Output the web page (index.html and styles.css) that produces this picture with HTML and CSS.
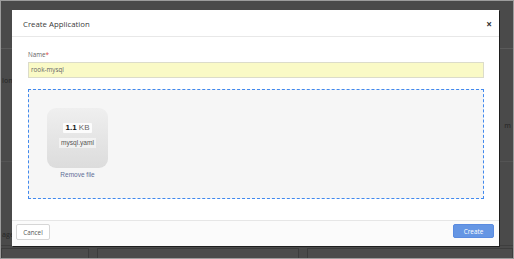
FILE: index.html
```html
<!DOCTYPE html>
<html lang="en">
<head>
<meta charset="utf-8">
<title>Create Application</title>
<link rel="stylesheet" href="styles.css">
</head>
<body>
<div class="screen">
  <div class="page">
    <div class="page-top"></div>
    <div class="page-mid">
      <div class="side-text left-a">ion</div>
      <div class="side-text right-a">m</div>
    </div>
    <div class="page-foot">
      <div class="side-text left-b">age</div>
    </div>
    <div class="page-cards">
      <div class="card c1"></div>
      <div class="card c2"></div>
      <div class="card c3"></div>
    </div>
  </div>

  <div class="modal">
    <div class="modal-header">
      <span class="modal-title">Create Application</span>
      <span class="modal-close">&times;</span>
    </div>
    <div class="modal-body">
      <label class="field-label">Name<span class="req">*</span></label>
      <div class="text-input">rook-mysql</div>
      <div class="dropzone">
        <div class="preview">
          <div class="preview-box">
            <span class="size"><strong>1.1</strong> KB</span>
            <span class="filename">mysql.yaml</span>
          </div>
          <a class="remove">Remove file</a>
        </div>
      </div>
    </div>
    <div class="modal-footer">
      <button class="btn btn-cancel">Cancel</button>
      <button class="btn btn-create">Create</button>
    </div>
  </div>
</div>
</body>
</html>
```

FILE: styles.css
```css
* { box-sizing: border-box; }
html, body { margin: 0; padding: 0; }
body { background: #4a4a4a; font-family: "Open Sans", "Liberation Sans", sans-serif; }

.screen {
  position: relative;
  width: 514px;
  height: 259px;
  border: 1px solid #9c9c9c;
  background: #4a4a4a;
  overflow: hidden;
}

/* dimmed page behind overlay */
.page { display: flex; flex-direction: column; height: 100%; }
.page-top { height: 49px; border-bottom: 1px solid #5a5a5a; }
.page-mid { height: 115px; border-bottom: 1px solid #545454; display: flex; justify-content: space-between; align-items: center; }
.page-foot { height: 85px; border-bottom: 1px solid #3e3e3e; display: flex; align-items: flex-end; padding-bottom: 6px; }
.side-text { font-size: 7px; color: #2c2c2c; font-weight: 600; }
.left-a { margin-left: 1px; margin-top: -50px; }
.right-a { margin-right: 2px; margin-top: 40px; }
.left-b { margin-left: 1px; }
.page-cards { display: flex; gap: 8px; padding-top: 2px; flex: 1; }
.card { border: 1px solid #3c3c3c; border-bottom: 0; background: #4c4c4c; height: 10px; }
.c1 { width: 88px; }
.c2 { width: 202px; }
.c3 { flex: 1; }

/* modal overlay */
.modal {
  position: absolute;
  left: 11px;
  top: 9px;
  width: 487px;
  height: 236px;
  background: #fff;
  box-shadow: 1px 1px 0 #1e1e1e;
  display: flex;
  flex-direction: column;
}
.modal-header {
  height: 27px;
  border-bottom: 1px solid #e8e8e8;
  display: flex;
  align-items: center;
  justify-content: space-between;
  padding: 1px 7px 0 11px;
}
.modal-title { font-size: 7.8px; color: #3a3a3a; }
.modal-close { font-size: 10px; font-weight: 700; color: #333; line-height: 1; }

.modal-body { flex: 1; padding: 13px 15px 0 16px; display: flex; flex-direction: column; }
.field-label { font-size: 6.3px; color: #666; line-height: 10px; height: 10px; }
.req { color: #e0453a; }
.text-input {
  margin-top: 2px;
  height: 16px;
  background: #fafac6;
  border: 1px solid #dcdcca;
  font-size: 6.3px;
  color: #666;
  padding-left: 2px;
  line-height: 14px;
}
.dropzone {
  margin-top: 11px;
  height: 110px;
  border: 1px dashed #4189ee;
  background: #f6f6f6;
  padding: 18px 0 0 18px;
}
.preview { width: 61px; display: flex; flex-direction: column; align-items: center; }
.preview-box {
  width: 61px;
  height: 60px;
  border-radius: 9px;
  background: linear-gradient(#efefef, #dcdcdc);
  display: flex;
  flex-direction: column;
  align-items: center;
  padding-top: 15px;
  gap: 5px;
  font-family: "Liberation Sans", Arial, sans-serif;
}
.size { background: rgba(255,255,255,0.85); font-size: 8px; color: #666; padding: 1px 2px; line-height: 8px; border-radius: 1px; }
.size strong { color: #111; }
.filename { background: rgba(255,255,255,0.5); font-size: 6.6px; color: #555; padding: 1px 2px; line-height: 8px; }
.remove { font-family: "Liberation Sans", Arial, sans-serif; font-size: 6.5px; color: #5f6f97; margin-top: 3px; line-height: 8px; }

.modal-footer {
  height: 26px;
  border-top: 1px solid #e6e6e6;
  background: #fbfbfb;
  display: flex;
  justify-content: space-between;
  align-items: flex-start;
  padding: 3px 5px 0 4px;
}
.btn { font-family: "Open Sans", "Liberation Sans", sans-serif; font-size: 6.3px; border-radius: 2px; padding: 0; cursor: pointer; }
.btn-cancel { width: 34px; height: 16px; background: #fff; border: 1px solid #d6d6d6; color: #555; }
.btn-create { width: 41px; height: 14px; background: #6596e4; border: 1px solid #5a8be0; color: #fff; }
```
